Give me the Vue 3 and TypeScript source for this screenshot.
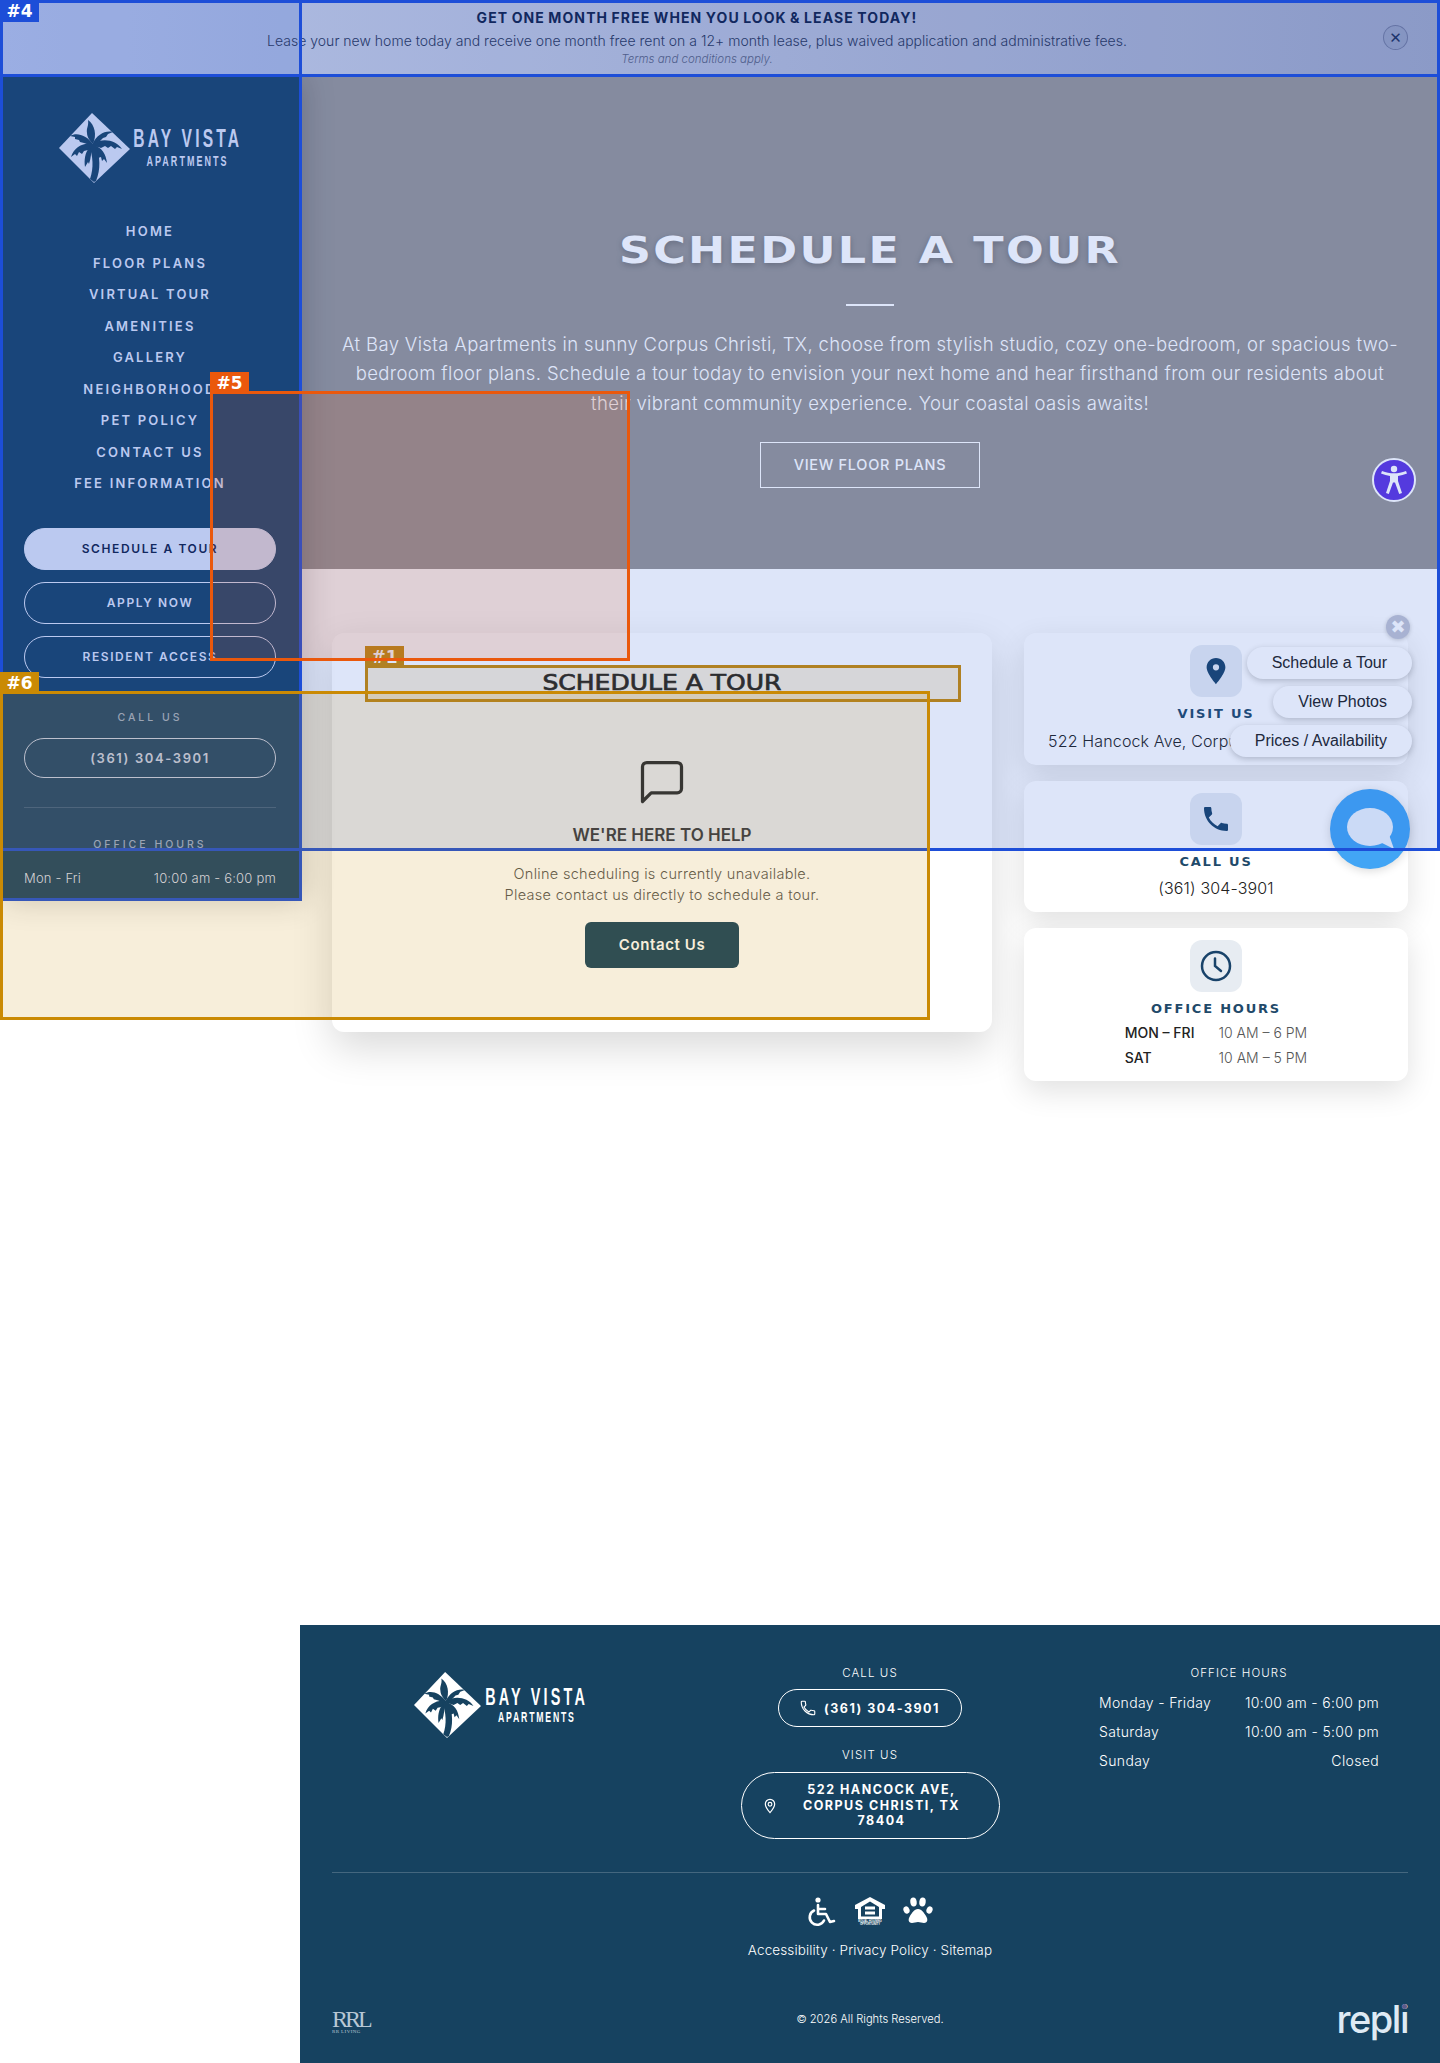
<script setup lang="ts">
type Mark = { id: string; x: number; y: number; w: number; h: number; line: string; fill: string; inner?: boolean };

const nav = ["Home", "Floor Plans", "Virtual Tour", "Amenities", "Gallery", "Neighborhood", "Pet Policy", "Contact Us", "Fee Information"];

const blue = "#1d4ed8";
const orange = "#ea580c";
const gold = "#ca8a04";

const marks: Mark[] = [
  { id: "#1", x: 365, y: 665, w: 596, h: 37, line: gold, fill: "rgba(202,138,4,.15)" },
  { id: "#4", x: 0, y: 0, w: 1440, h: 851, line: blue, fill: "rgba(29,78,216,.15)", inner: true },
  { id: "", x: 0, y: 0, w: 302, h: 901, line: blue, fill: "transparent" },
  { id: "", x: 0, y: 0, w: 1440, h: 77, line: blue, fill: "transparent" },
  { id: "#5", x: 210, y: 391, w: 420, h: 270, line: orange, fill: "rgba(234,88,12,.15)" },
  { id: "#6", x: 0, y: 691, w: 930, h: 329, line: gold, fill: "rgba(202,138,4,.15)" },
];

const chips = ["Schedule a Tour", "View Photos", "Prices / Availability"];
const footerHours = [
  ["Monday - Friday", "10:00 am - 6:00 pm"],
  ["Saturday", "10:00 am - 5:00 pm"],
  ["Sunday", "Closed"],
];
</script>

<template>
  <div class="page">
    <svg width="0" height="0" class="defs">
      <symbol id="palm-logo" viewBox="0 0 71 70">
        <path fill="currentColor" d="M33 0 71 36 35 70 0 35Z" />
        <g fill="var(--palm)">
          <path d="M34 31C38 22 36 12 29 7 30 13 27 15 28 20 28 24 31 28 34 31Z" />
          <path d="M34 30C38 22 46 17 54 19L49 21 47 24 44 25 41 28C39 29 37 30 34 32Z" />
          <path d="M34 30C45 25 57 27 63 36L58 34 56 36 52 33 49 35 46 33 42 35C39 34 36 33 34 33Z" />
          <path d="M34 31C27 22 18 19 11 23L16 24 16 26 20 27 21 29 25 30C28 31 31 32 34 34Z" />
          <path d="M34 31C25 29 15 34 12 44L16 41 18 43 20 39 23 41 25 38 29 37C31 36 33 35 34 34Z" />
          <path d="M34 32C43 34 47 41 48 50L45 46 43 48 42 44 39 45 38 41 36 39Z" />
          <path d="M30 35C26 40 25 47 26 54L29 49 30 51C32 45 32 40 33 35Z" />
          <path d="M30 32H37C41 44 42 56 37 68L35 69 31 66C35 55 34 43 30 32Z" />
        </g>
      </symbol>
    </svg>

    <div class="banner">
      <div class="banner-left"></div>
      <div class="banner-copy">
        <strong>GET ONE MONTH FREE WHEN YOU LOOK &amp; LEASE TODAY!</strong>
        <p>Lease your new home today and receive one month free rent on a 12+ month lease, plus waived application and administrative fees.</p>
        <em>Terms and conditions apply.</em>
      </div>
      <button class="banner-close" type="button">✕</button>
    </div>

    <div class="shell">
      <aside class="sidebar">
        <div class="logo side-logo">
          <svg class="logo-mark"><use href="#palm-logo" /></svg>
          <div class="logo-text">
            <span class="logo-big">BAY VISTA</span>
            <span class="logo-small">APARTMENTS</span>
          </div>
        </div>
        <nav class="side-nav">
          <a v-for="item in nav" :key="item">{{ item }}</a>
        </nav>
        <a class="pill pill-solid">Schedule a Tour</a>
        <a class="pill">Apply Now</a>
        <a class="pill">Resident Access</a>
        <div class="side-label">CALL US</div>
        <a class="pill pill-phone">(361) 304-3901</a>
        <div class="side-rule"></div>
        <div class="side-label side-label-hours">OFFICE HOURS</div>
        <div class="side-hours"><span>Mon - Fri</span><span>10:00 am - 6:00 pm</span></div>
      </aside>

      <main class="main">
        <section class="hero">
          <h1><span>SCHEDULE A TOUR</span></h1>
          <div class="hero-rule"></div>
          <p>
            At Bay Vista Apartments in sunny Corpus Christi, TX, choose from stylish studio, cozy one-bedroom, or spacious two-<br />
            bedroom floor plans. Schedule a tour today to envision your next home and hear firsthand from our residents about<br />
            their vibrant community experience. Your coastal oasis awaits!
          </p>
          <a class="hero-btn">VIEW FLOOR PLANS</a>
        </section>

        <section class="content">
          <div class="card tour-card">
            <h2><span>SCHEDULE A TOUR</span></h2>
            <svg class="msg-icon" viewBox="0 0 24 24" fill="none" stroke="currentColor" stroke-width="1.5" stroke-linejoin="round">
              <path d="M21 15a2 2 0 0 1-2 2H7l-4 4V5a2 2 0 0 1 2-2h14a2 2 0 0 1 2 2z" />
            </svg>
            <h3>WE'RE HERE TO HELP</h3>
            <p>Online scheduling is currently unavailable.<br />Please contact us directly to schedule a tour.</p>
            <a class="contact-btn">Contact Us</a>
          </div>

          <div class="info-col">
            <div class="card info-card">
              <div class="tile">
                <svg width="30" height="30" viewBox="0 0 24 24"><path fill="currentColor" fill-rule="evenodd" d="M12 1.5C7.8 1.5 4.5 4.8 4.5 9c0 5 7.5 13.5 7.5 13.5S19.5 14 19.5 9c0-4.2-3.300-7.500-7.500-7.500zM12 11.500a2.500 2.500 0 1 1 0-5 2.500 2.500 0 0 1 0 5z" /></svg>
              </div>
              <h4>VISIT US</h4>
              <div class="info-value">522 Hancock Ave, Corpus Christi, TX 78404</div>
            </div>
            <div class="card info-card">
              <div class="tile">
                <svg width="32" height="32" viewBox="0 0 24 24"><path fill="currentColor" d="M6.600 10.800c1.400 2.800 3.800 5.100 6.600 6.600l2.200-2.200c.3-.3.700-.4 1-.2 1.100.4 2.300.6 3.600.6.600 0 1 .4 1 1V20c0 .6-.4 1-1 1C10.600 21 3 13.400 3 4c0-.6.4-1 1-1h3.500c.6 0 1 .4 1 1 0 1.200.2 2.400.6 3.600.1.300 0 .7-.2 1z" /></svg>
              </div>
              <h4>CALL US</h4>
              <div class="info-value">(361) 304-3901</div>
            </div>
            <div class="card info-card info-card-hours">
              <div class="tile">
                <svg width="32" height="32" viewBox="0 0 32 32" fill="none" stroke="currentColor" stroke-width="2.500" stroke-linecap="round"><circle cx="16" cy="16" r="14" /><path d="M15 8.500V16l6 5" /></svg>
              </div>
              <h4>OFFICE HOURS</h4>
              <div class="info-hours">
                <b>MON – FRI</b><span>10 AM – 6 PM</span>
                <b>SAT</b><span>10 AM – 5 PM</span>
              </div>
            </div>
          </div>
        </section>

        <footer class="footer">
          <div class="foot-cols">
            <div class="foot-col">
              <div class="logo foot-logo">
                <svg class="logo-mark"><use href="#palm-logo" /></svg>
                <div class="logo-text">
                  <span class="logo-big">BAY VISTA</span>
                  <span class="logo-small">APARTMENTS</span>
                </div>
              </div>
            </div>
            <div class="foot-col">
              <div class="foot-label">CALL US</div>
              <a class="foot-pill foot-phone">
                <svg width="18" height="18" viewBox="0 0 24 24" fill="none" stroke="currentColor" stroke-width="1.500"><path d="M6.600 10.800c1.400 2.800 3.800 5.100 6.600 6.600l2.200-2.200c.3-.3.700-.4 1-.2 1.100.4 2.300.6 3.600.6.600 0 1 .4 1 1V20c0 .6-.4 1-1 1C10.600 21 3 13.400 3 4c0-.6.4-1 1-1h3.500c.6 0 1 .4 1 1 0 1.200.2 2.400.6 3.600.1.300 0 .7-.2 1z" /></svg>
                (361) 304-3901
              </a>
              <div class="foot-label foot-label-visit">VISIT US</div>
              <a class="foot-pill foot-addr">
                <svg width="16" height="18" viewBox="0 0 24 24" fill="none" stroke="currentColor" stroke-width="1.800"><path d="M12 2C7.800 2 5 5.200 5 9c0 5 7 13 7 13s7-8 7-13c0-3.800-2.800-7-7-7z" /><circle cx="12" cy="9.500" r="2.800" /></svg>
                <span>522 HANCOCK AVE,<br />CORPUS CHRISTI, TX<br />78404</span>
              </a>
            </div>
            <div class="foot-col">
              <div class="foot-label">OFFICE HOURS</div>
              <div class="foot-hours">
                <div v-for="row in footerHours" :key="row[0]" class="foot-row"><span>{{ row[0] }}</span><span>{{ row[1] }}</span></div>
              </div>
            </div>
          </div>

          <div class="foot-rule"></div>

          <div class="foot-icons">
            <svg width="30" height="30" viewBox="0 0 30 30" fill="none" stroke="currentColor" stroke-width="2.600" stroke-linecap="round" stroke-linejoin="round">
              <circle cx="11" cy="3" r="2.600" fill="currentColor" stroke="none" />
              <path d="M11 8v9h8l4 8 4-1M11 12h7" />
              <path d="M7 13.500a7.500 7.500 0 1 0 10 10" />
            </svg>
            <svg width="30" height="28" viewBox="0 0 30 28" fill="currentColor">
              <path fill-rule="evenodd" d="M15 0 30 8v4h-3v10H3V12H0V8ZM6 10v9.500h18V10L15 4.500Z" />
              <rect x="10" y="9.500" width="10" height="3" />
              <rect x="10" y="14.500" width="10" height="3" />
              <text x="15" y="25" font-size="2.800" font-weight="700" text-anchor="middle" class="eho">EQUAL HOUSING</text>
              <text x="15" y="28" font-size="2.800" font-weight="700" text-anchor="middle" class="eho">OPPORTUNITY</text>
            </svg>
            <svg width="30" height="28" viewBox="0 0 30 28" fill="currentColor">
              <ellipse cx="3.500" cy="13" rx="3" ry="3.800" transform="rotate(-20 3.500 13)" />
              <ellipse cx="10.500" cy="5" rx="3.200" ry="4.500" transform="rotate(-8 10.500 5)" />
              <ellipse cx="19.500" cy="5" rx="3.200" ry="4.500" transform="rotate(8 19.500 5)" />
              <ellipse cx="26.500" cy="13" rx="3" ry="3.800" transform="rotate(20 26.500 13)" />
              <path d="M15 12c4 0 6 4 8 7 2 3 2 7-2 7-2 0-4-1-6-1s-4 1-6 1c-4 0-4-4-2-7 2-3 4-7 8-7z" />
            </svg>
          </div>

          <div class="foot-links">Accessibility · Privacy Policy · Sitemap</div>

          <div class="foot-bottom">
            <div class="rrl"><span class="rrl-big">RRL</span><span class="rrl-small">RR LIVING</span></div>
            <div class="copy">© 2026 All Rights Reserved.</div>
            <div class="repli">repli<i></i></div>
          </div>
        </footer>
      </main>
    </div>

    <button class="a11y" type="button" aria-label="Accessibility">
      <svg width="36" height="36" viewBox="0 0 36 36" fill="#fff">
        <circle cx="18" cy="7" r="3.200" />
        <path d="M5 11.500l1-2.500c4 1.500 8 2.300 12 2.300s8-.8 12-2.300l1 2.500c-3 1.300-6 2-9 2.500v5l4 12-2.800 1-4.200-11.500h-2l-4.200 11.500-2.800-1 4-12v-5c-3-.5-6-1.200-9-2.500z" />
      </svg>
    </button>

    <div class="chat">
      <button class="chat-close" type="button">✖</button>
      <button v-for="chip in chips" :key="chip" class="chip" type="button">{{ chip }}</button>
      <button class="chat-bubble" type="button" aria-label="Chat">
        <svg width="80" height="80" viewBox="0 0 80 80">
          <ellipse cx="40" cy="38" rx="23" ry="19" fill="#eaf2fc" />
          <path d="M48 52 57 40 64 60Z" fill="#eaf2fc" />
        </svg>
      </button>
    </div>

    <div
      v-for="(mark, i) in marks"
      :key="i"
      class="mark"
      :style="{ left: mark.x + 'px', top: mark.y + 'px', width: mark.w + 'px', height: mark.h + 'px', borderColor: mark.line, background: mark.fill }"
    >
      <span v-if="mark.id" class="mark-tag" :class="{ 'mark-tag-inner': mark.inner }" :style="{ background: mark.line }">{{ mark.id }}</span>
    </div>
  </div>
</template>

<style>
html,
body {
  margin: 0;
  background: #fff;
}
</style>

<style scoped>
.page {
  position: relative;
  width: 1440px;
  overflow: hidden;
  font-family: Inter, "Noto Sans", sans-serif;
  color: #1f2020;
  --navy: #19436a;
  --light: #d8dff5;
}
.defs {
  position: absolute;
}
.banner {
  position: relative;
  z-index: 3;
  height: 76px;
  background: linear-gradient(90deg, #cdd3e8, #9fa7c5);
  display: flex;
  align-items: center;
  justify-content: center;
  padding-right: 46px;
  color: #10214a;
}
.banner-left {
  position: absolute;
  left: 0;
  top: 0;
  width: 300px;
  height: 76px;
  background: rgba(29, 78, 216, 0.15);
}
.banner-copy {
  position: relative;
  text-align: center;
  display: flex;
  flex-direction: column;
}
.banner-copy strong {
  font-size: 14px;
  line-height: 18px;
  font-weight: 700;
  letter-spacing: 1.100px;
  word-spacing: -1px;
}
.banner-copy p {
  margin: 4px 0 0;
  font-size: 14px;
  line-height: 20px;
  font-weight: 300;
  letter-spacing: 0.010px;
  color: #2a3658;
}
.banner-copy em {
  font-size: 11.500px;
  line-height: 16px;
  font-weight: 300;
  color: #59627f;
}
.banner-close {
  position: absolute;
  left: 1383px;
  top: 25px;
  width: 25px;
  height: 25px;
  border-radius: 50%;
  border: 1px solid rgba(40, 50, 90, 0.35);
  background: rgba(40, 50, 90, 0.06);
  color: #20305a;
  padding: 0;
  font-size: 15px;
  line-height: 22px;
  font-family: "DejaVu Sans", sans-serif;
}

.shell {
  display: flex;
  align-items: flex-start;
}
.sidebar {
  position: relative;
  z-index: 2;
  flex: 0 0 300px;
  height: 824px;
  box-sizing: border-box;
  padding: 37px 24px 0;
  overflow: hidden;
  background: var(--navy);
  color: var(--light);
  box-shadow: 4px 0 30px rgba(0, 0, 0, 0.2);
  display: flex;
  flex-direction: column;
}
.logo {
  display: flex;
  align-items: center;
  justify-content: center;
  --palm: var(--navy);
}
.logo-text {
  display: flex;
  flex-direction: column;
  align-items: center;
  font-family: "Liberation Sans", sans-serif;
  font-weight: 700;
  white-space: nowrap;
}
.logo-big,
.logo-small {
  transform: scaleX(0.6);
}
.side-logo {
  height: 70px;
  flex: none;
  gap: 5px;
}
.side-logo .logo-mark {
  width: 71px;
  height: 70px;
}
.side-logo .logo-text {
  width: 107px;
  margin-top: -2px;
}
.side-logo .logo-big {
  font-size: 26px;
  line-height: 27px;
  letter-spacing: 5.300px;
}
.side-logo .logo-small {
  font-size: 15px;
  line-height: 18px;
  letter-spacing: 3.400px;
}
.side-nav {
  margin: 33px 0 28px;
  display: flex;
  flex-direction: column;
  align-items: center;
  flex: none;
}
.side-nav a {
  height: 31.500px;
  line-height: 31.500px;
  font-size: 13px;
  font-weight: 600;
  letter-spacing: 2.200px;
  text-transform: uppercase;
}
.pill {
  flex: none;
  display: block;
  height: 42px;
  box-sizing: border-box;
  margin-bottom: 12px;
  border: 1px solid var(--light);
  border-radius: 21px;
  text-align: center;
  line-height: 40px;
  font-size: 12px;
  font-weight: 600;
  letter-spacing: 1.600px;
  text-transform: uppercase;
}
.pill-solid {
  background: var(--light);
  color: #10214a;
}
.pill-phone {
  height: 40px;
  margin: 0;
  line-height: 38px;
  font-size: 13px;
  letter-spacing: 1.600px;
}
.side-label {
  flex: none;
  margin: 21px 0 13px;
  text-align: center;
  font-size: 10.500px;
  line-height: 14px;
  font-weight: 500;
  letter-spacing: 3px;
  opacity: 0.75;
}
.side-label-hours {
  margin: 30px 0 16px;
}
.side-rule {
  flex: none;
  margin-top: 29px;
  height: 1px;
  background: rgba(216, 223, 245, 0.2);
}
.side-hours {
  flex: none;
  display: flex;
  justify-content: space-between;
  font-size: 13px;
  line-height: 20px;
  font-weight: 300;
  letter-spacing: 0.200px;
}

.main {
  flex: 1;
  min-width: 0;
}
.hero {
  height: 493px;
  box-sizing: border-box;
  padding-top: 150px;
  background: #989696;
  color: #fff;
  display: flex;
  flex-direction: column;
  align-items: center;
  text-align: center;
}
.hero h1 {
  margin: 0;
  font-family: "DejaVu Sans", sans-serif;
  font-size: 38px;
  line-height: 48px;
  font-weight: 700;
  letter-spacing: 2px;
  text-shadow: 0 2px 6px rgba(0, 0, 0, 0.25);
}
.hero h1 span {
  display: inline-block;
  transform: scaleX(1.168);
}
.hero-rule {
  width: 48px;
  height: 2px;
  margin-top: 30px;
  background: #fff;
}
.hero p {
  margin: 23.500px 0 0;
  font-size: 18.500px;
  line-height: 29.500px;
  font-weight: 300;
  letter-spacing: 0.360px;
  white-space: nowrap;
}
.hero-btn {
  margin-top: 23.500px;
  width: 220px;
  height: 46px;
  box-sizing: border-box;
  border: 1px solid #fff;
  line-height: 44px;
  font-size: 14.500px;
  font-weight: 500;
  letter-spacing: 0.700px;
}

.content {
  display: grid;
  grid-template-columns: 660px 384px;
  gap: 32px;
  align-items: start;
  min-height: 1056px;
  box-sizing: border-box;
  padding: 64px 32px 0;
}
.card {
  background: #fff;
  border-radius: 12px;
  box-shadow: 0 10px 30px rgba(0, 0, 0, 0.12);
}
.tour-card {
  box-sizing: border-box;
  height: 399px;
  padding: 32px 33px 0;
  display: flex;
  flex-direction: column;
  align-items: center;
  text-align: center;
  box-shadow: 0 16px 40px rgba(0, 0, 0, 0.15);
}
.tour-card h2 {
  margin: 0;
  font-family: "DejaVu Sans", sans-serif;
  font-size: 20.500px;
  line-height: 36px;
  font-weight: 400;
  color: #141414;
  -webkit-text-stroke: 0.700px currentColor;
}
.tour-card h2 span {
  display: inline-block;
  transform: scaleX(1.22);
}
.msg-icon {
  width: 52px;
  height: 52px;
  margin-top: 55px;
}
.tour-card h3 {
  margin: 15px 0 0;
  font-size: 17px;
  line-height: 24px;
  font-weight: 600;
  color: #333;
}
.tour-card p {
  margin: 16px 0 0;
  font-size: 14.500px;
  line-height: 21px;
  font-weight: 300;
  letter-spacing: 0.300px;
  color: #555;
}
.contact-btn {
  margin-top: 17px;
  width: 154px;
  height: 46px;
  border-radius: 6px;
  background: #164460;
  color: #fff;
  line-height: 46px;
  font-size: 15px;
  font-weight: 600;
  letter-spacing: 0.600px;
}
.info-col {
  display: flex;
  flex-direction: column;
  gap: 16px;
}
.info-card {
  padding: 12px 0 12px;
  display: flex;
  flex-direction: column;
  align-items: center;
  text-align: center;
}
.info-card-hours {
  padding-bottom: 13px;
}
.tile {
  width: 52px;
  height: 52px;
  border-radius: 12px;
  background: #e7ecf2;
  color: #19436a;
  display: flex;
  align-items: center;
  justify-content: center;
}
.info-card h4 {
  margin: 8px 0 0;
  font-family: "DejaVu Sans", sans-serif;
  font-size: 13px;
  line-height: 18px;
  font-weight: 700;
  letter-spacing: 1.800px;
  color: #1f4a6a;
}
.info-value {
  margin-top: 5.500px;
  font-size: 16px;
  line-height: 24px;
  font-weight: 300;
  letter-spacing: 0.150px;
  color: #222;
}
.info-hours {
  margin-top: 5px;
  display: grid;
  grid-template-columns: auto auto;
  column-gap: 24px;
  row-gap: 5px;
  font-size: 14px;
  line-height: 20px;
  text-align: left;
}
.info-hours b {
  font-weight: 500;
  color: #222;
}
.info-hours span {
  text-align: right;
  font-weight: 300;
  color: #555;
}

.footer {
  height: 438px;
  box-sizing: border-box;
  padding: 41px 32px 0;
  background: #164260;
  color: #fff;
}
.foot-cols {
  display: grid;
  grid-template-columns: repeat(3, 1fr);
  gap: 31px;
  height: 206px;
}
.foot-col {
  display: flex;
  flex-direction: column;
  align-items: center;
}
.foot-logo {
  margin-top: 6px;
  gap: 5px;
  color: #fff;
  --palm: #164260;
}
.foot-logo .logo-mark {
  width: 67px;
  height: 66px;
}
.foot-logo .logo-text {
  width: 102px;
}
.foot-logo .logo-big {
  font-size: 24px;
  line-height: 25px;
  letter-spacing: 5.300px;
}
.foot-logo .logo-small {
  font-size: 14.500px;
  line-height: 17px;
  letter-spacing: 3px;
}
.foot-label {
  font-size: 11.500px;
  line-height: 14px;
  font-weight: 300;
  letter-spacing: 1.100px;
}
.foot-label-visit {
  margin-top: 21px;
}
.foot-pill {
  box-sizing: border-box;
  border: 1px solid #fff;
  display: flex;
  align-items: center;
  font-size: 12.500px;
  font-weight: 700;
  letter-spacing: 1.500px;
}
.foot-phone {
  margin-top: 9px;
  width: 184px;
  height: 38px;
  border-radius: 19px;
  padding-left: 20px;
  gap: 7px;
  white-space: nowrap;
}
.foot-addr {
  margin-top: 10px;
  width: 259px;
  height: 67px;
  border-radius: 34px;
  padding: 0 19px 0 20px;
  gap: 6px;
  line-height: 15.500px;
}
.foot-addr span {
  flex: 1;
  text-align: center;
}
.foot-hours {
  width: 280px;
  margin-top: 8px;
}
.foot-row {
  display: flex;
  justify-content: space-between;
  font-size: 14px;
  line-height: 29px;
  font-weight: 300;
  letter-spacing: 0.350px;
}
.foot-rule {
  height: 1px;
  background: rgba(255, 255, 255, 0.2);
}
.foot-icons {
  margin-top: 24px;
  display: flex;
  justify-content: center;
  gap: 18px;
}
.eho {
  font-family: "Liberation Sans", sans-serif;
}
.foot-links {
  margin-top: 13px;
  text-align: center;
  font-size: 13.500px;
  line-height: 20px;
  font-weight: 300;
  letter-spacing: 0.120px;
}
.foot-bottom {
  margin-top: 42px;
  display: grid;
  grid-template-columns: 1fr auto 1fr;
  align-items: center;
  height: 34px;
}
.rrl {
  display: flex;
  flex-direction: column;
  width: 38px;
  margin-top: 5px;
  color: #b8c7d4;
  font-family: "Liberation Serif", serif;
}
.rrl-big {
  font-size: 24px;
  line-height: 20px;
  letter-spacing: -3px;
}
.rrl-small {
  font-size: 5px;
  line-height: 6px;
  letter-spacing: 0.400px;
  white-space: nowrap;
}
.copy {
  font-size: 11.200px;
  line-height: 16px;
  font-weight: 300;
}
.repli {
  position: relative;
  justify-self: end;
  font-size: 38px;
  line-height: 34px;
  font-weight: 500;
  letter-spacing: -1.500px;
  color: #dfeaf4;
}
.repli i {
  position: absolute;
  right: 1px;
  top: 2px;
  width: 5px;
  height: 5px;
  border-radius: 50%;
  background: #5d5a8a;
}

.a11y {
  position: absolute;
  z-index: 3;
  left: 1372px;
  top: 458px;
  width: 44px;
  height: 44px;
  box-sizing: border-box;
  padding: 2px;
  border: 2px solid #fff;
  border-radius: 50%;
  background: #5f37e0;
  display: flex;
  align-items: center;
  justify-content: center;
}
.chat {
  position: absolute;
  z-index: 3;
  top: 615px;
  right: 28px;
  display: flex;
  flex-direction: column;
  align-items: flex-end;
  gap: 7px;
}
.chat-close {
  width: 24px;
  height: 24px;
  margin: 0 2px 1px 0;
  padding: 0;
  border: 0;
  border-radius: 50%;
  background: #c1c4d2;
  color: #fff;
  font-size: 18px;
  line-height: 24px;
  font-family: "DejaVu Sans", sans-serif;
  box-shadow: 0 1px 4px rgba(0, 0, 0, 0.2);
}
.chip {
  height: 32px;
  padding: 0 25px;
  border: 0;
  border-radius: 17px;
  background: #fff;
  color: #222;
  font-family: "Liberation Sans", sans-serif;
  font-size: 16px;
  box-shadow: 0 2px 6px rgba(0, 0, 0, 0.22);
}
.chat-bubble {
  width: 80px;
  height: 80px;
  margin: 25px 2px 0 0;
  padding: 0;
  border: 0;
  border-radius: 50%;
  background: #42a5f5;
  box-shadow: 0 2px 10px rgba(0, 0, 0, 0.15);
}
.chat-bubble svg {
  display: block;
}

.mark {
  position: absolute;
  z-index: 5;
  box-sizing: border-box;
  border: 3px solid;
  pointer-events: none;
}
.mark-tag {
  position: absolute;
  left: -3px;
  bottom: 100%;
  width: 39px;
  height: 22px;
  color: #fff;
  font-family: "DejaVu Sans", sans-serif;
  font-size: 17px;
  font-weight: 700;
  line-height: 22px;
  text-align: center;
}
.mark-tag-inner {
  top: -3px;
  bottom: auto;
}
</style>
